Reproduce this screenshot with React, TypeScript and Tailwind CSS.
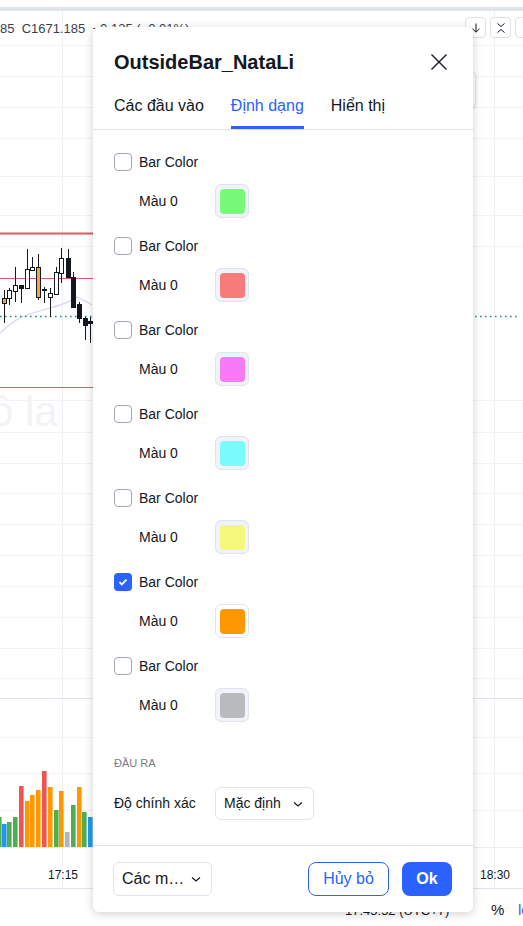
import React from "react"

const candles = [
  { x: 4, t: 298, b: 303, wt: 290, wb: 323, c: "o" },
  { x: 9, t: 290, b: 298, wt: 288, wb: 305, c: "w" },
  { x: 15, t: 285, b: 291, wt: 267, wb: 302, c: "w" },
  { x: 21, t: 285, b: 288, wt: 285, wb: 303, c: "b" },
  { x: 27, t: 269, b: 288, wt: 249, wb: 288, c: "w" },
  { x: 32, t: 267, b: 270, wt: 257, wb: 270, c: "w" },
  { x: 38, t: 267, b: 297, wt: 254, wb: 300, c: "o" },
  { x: 44, t: 289, b: 290, wt: 287, wb: 303, c: "b" },
  { x: 50, t: 293, b: 297, wt: 288, wb: 317, c: "w" },
  { x: 56, t: 272, b: 294, wt: 267, wb: 294, c: "w" },
  { x: 61, t: 258, b: 273, wt: 248, wb: 283, c: "w" },
  { x: 68, t: 258, b: 277, wt: 249, wb: 277, c: "b" },
  { x: 73, t: 277, b: 307, wt: 272, wb: 307, c: "b" },
  { x: 79, t: 304, b: 318, wt: 302, wb: 323, c: "b" },
  { x: 85, t: 318, b: 325, wt: 317, wb: 340, c: "b" },
  { x: 90, t: 321, b: 323, wt: 317, wb: 343, c: "b" },
]

const volume = [
  { x: -3, t: 817, c: "#4caf50" },
  { x: 2, t: 824, c: "#2196f3" },
  { x: 7, t: 822, c: "#4caf50" },
  { x: 13, t: 817, c: "#4caf50" },
  { x: 19, t: 786, c: "#f05350" },
  { x: 25, t: 801, c: "#ff9800" },
  { x: 30, t: 795, c: "#ff9800" },
  { x: 36, t: 790, c: "#ff9800" },
  { x: 42, t: 771, c: "#f05350" },
  { x: 48, t: 787, c: "#ff9800" },
  { x: 54, t: 810, c: "#4caf50" },
  { x: 59, t: 791, c: "#ff9800" },
  { x: 65, t: 832, c: "#b2b5be" },
  { x: 71, t: 805, c: "#4caf50" },
  { x: 77, t: 787, c: "#ff9800" },
  { x: 82, t: 812, c: "#4caf50" },
  { x: 88, t: 817, c: "#2196f3" },
]

const rows = [
  { checked: false, color: "#79f979" },
  { checked: false, color: "#f77b7b" },
  { checked: false, color: "#f77bf5" },
  { checked: false, color: "#79fbfb" },
  { checked: false, color: "#f5f77b" },
  { checked: true, color: "#ff9800" },
  { checked: false, color: "#b9babe" },
]

const gridY = [45, 76, 107, 138, 176, 215, 246, 400, 432, 463, 493, 524, 555, 586, 617, 648, 678, 737, 773, 810]

function Chart() {
  return (
    <svg className="absolute left-0 top-0" width="523" height="926">
      {gridY.map((y) => (
        <line key={y} x1="0" x2="523" y1={y + 0.5} y2={y + 0.5} stroke="#f2f3f6" />
      ))}
      <line x1="62.5" x2="62.5" y1="11" y2="888" stroke="#f0f1f4" />
      <line x1="494.5" x2="494.5" y1="11" y2="888" stroke="#f0f1f4" />
      <line x1="0" x2="523" y1="698.5" y2="698.5" stroke="#e0e3eb" />
      <line x1="0" x2="523" y1="847.5" y2="847.5" stroke="#eceef2" />
      <line x1="0" x2="523" y1="888.5" y2="888.5" stroke="#e0e3eb" />
      <line x1="0" x2="93" y1="233.5" y2="233.5" stroke="#dc5a60" strokeWidth="2" />
      <line x1="0" x2="93" y1="278.5" y2="278.5" stroke="#dd5c63" />
      <line x1="0" x2="93" y1="387.5" y2="387.5" stroke="#e0585f" />
      <path d="M0 333 Q12 322 20 318 T50 308 T73 298 T92 305" fill="none" stroke="#d7d3f5" strokeWidth="1.2" />
      <line x1="0" x2="520" y1="316.5" y2="316.5" stroke="#1f8e85" strokeWidth="1.6" strokeDasharray="1.6 3.4" />
      {candles.map((k, i) => (
        <g key={i}>
          <line x1={k.x + 0.5} x2={k.x + 0.5} y1={k.wt} y2={k.wb} stroke="#131722" />
          <rect
            x={k.x - 1.5}
            y={k.t + 0.5}
            width="4"
            height={Math.max(k.b - k.t, 1)}
            fill={k.c === "w" ? "#ffffff" : k.c === "o" ? "#f6a53d" : "#131722"}
            stroke="#131722"
            strokeWidth="1"
          />
        </g>
      ))}
      {volume.map((v, i) => (
        <rect key={i} x={v.x} y={v.t} width="4.6" height={847 - v.t} fill={v.c} />
      ))}
    </svg>
  )
}

function Chevron() {
  return (
    <svg width="18" height="18" viewBox="0 0 18 18" fill="none">
      <path d="M5 7.5l4 3.5 4-3.5" stroke="#131722" strokeWidth="1.2" />
    </svg>
  )
}

function Checkbox({ checked }: { checked: boolean }) {
  if (checked) {
    return (
      <div className="flex h-[18px] w-[18px] items-center justify-center rounded-[4px] bg-[#2962ff]">
        <svg width="12" height="12" viewBox="0 0 12 12" fill="none">
          <path d="M2.5 6.2l2.3 2.3 4.7-4.8" stroke="#ffffff" strokeWidth="1.8" />
        </svg>
      </div>
    )
  }
  return <div className="h-[18px] w-[18px] rounded-[4px] border border-[#a3a6af] bg-white" />
}

export default function App() {
  return (
    <div className="relative h-[926px] w-[523px] overflow-hidden bg-white font-['Liberation_Sans',Arial,sans-serif] text-[#131722]">
      <div className="absolute left-0 top-[7px] h-[4px] w-full bg-[#e0e3eb]" />
      <Chart />

      <div className="absolute left-0 top-[19px] whitespace-nowrap text-[13px] text-[#3b3f4a]">
        85&nbsp;&nbsp;C1671.185&nbsp;&nbsp;−0.135 (−0.01%)
      </div>

      <div className="absolute left-[465px] top-[17px] flex gap-[4px]">
        <div className="flex h-[21px] w-[21px] items-center justify-center rounded-[4px] border border-[#dfe1e6] bg-white">
          <svg width="12" height="12" viewBox="0 0 12 12" fill="none">
            <path d="M6 1.5v8.5M2.5 6.8L6 10.2l3.5-3.4" stroke="#131722" strokeWidth="1" />
          </svg>
        </div>
        <div className="flex h-[21px] w-[21px] items-center justify-center rounded-[4px] border border-[#dfe1e6] bg-white">
          <svg width="12" height="14" viewBox="0 0 12 14" fill="none">
            <path d="M2.5 2.5L6 5.5l3.5-3M2.5 11.5L6 8.5l3.5 3" stroke="#131722" strokeWidth="1" />
          </svg>
        </div>
        <div className="h-[21px] w-[21px] rounded-[4px] border border-[#dfe1e6] bg-white" />
      </div>

      <div className="absolute left-[300px] top-[71px] h-[37px] w-[176px] rounded-[5px] border border-[#e3e5ea] bg-white shadow-[0_1px_3px_rgba(0,0,0,0.12)]" />

      <div className="absolute left-[-10px] top-[391px] whitespace-nowrap text-[42px] leading-none text-[#f2f3f6]">
        ô la
      </div>

      <div className="absolute left-[48px] top-[866px] text-[12px] text-[#131722]">17:15</div>
      <div className="absolute left-[480px] top-[866px] text-[12px] text-[#131722]">18:30</div>
      <div className="absolute left-[345px] top-[901px] whitespace-nowrap text-[13px] text-[#131722]">
        17:45:52 (UTC+7)
      </div>
      <div className="absolute left-[491px] top-[899px] text-[15px] text-[#131722]">%</div>
      <div className="absolute left-[518px] top-[899px] text-[15px] text-[#2962ff]">log</div>

      {/* dialog */}
      <div className="absolute left-[93px] top-[27px] flex h-[885px] w-[380px] flex-col rounded-[6px] bg-white shadow-[0_2px_10px_rgba(0,0,0,0.18)]">
        <div className="mt-[21px] flex h-[28px] items-center justify-between pl-[21px] pr-[22px]">
          <div className="text-[20px] font-bold leading-[28px]">OutsideBar_NataLi</div>
          <svg width="24" height="24" viewBox="0 0 24 24" fill="none">
            <path d="M4.5 4.5l15 15M19.5 4.5l-15 15" stroke="#131722" strokeWidth="1.4" />
          </svg>
        </div>

        <div className="mt-[10px] flex h-[44px] gap-[27px] border-b border-[#e0e3eb] px-[21px] text-[16px]">
          <div className="relative flex h-[43px] items-center pb-[4px]">Các đầu vào</div>
          <div className="relative flex h-[43px] items-center pb-[4px] text-[#2962ff]">
            Định dạng
            <div className="absolute bottom-0 left-0 h-[3px] w-full bg-[#2962ff]" />
          </div>
          <div className="relative flex h-[43px] items-center pb-[4px]">Hiển thị</div>
        </div>

        <div className="flex flex-1 flex-col px-[21px] pt-[23px] text-[14px]">
          {rows.map((r, i) => (
            <div key={i} className="flex flex-col pb-[19px]">
              <div className="flex h-[18px] items-center gap-[7px]">
                <Checkbox checked={r.checked} />
                <span>Bar Color</span>
              </div>
              <div className="mt-[13px] flex items-center pl-[25px]">
                <span className="w-[76px]">Màu 0</span>
                <div
                  className={`flex h-[34px] w-[34px] items-center justify-center rounded-[6px] border border-[#e0e3eb] ${
                    r.checked ? "bg-white" : "bg-[#f0f3fa]"
                  }`}
                >
                  <div className="h-[25px] w-[25px] rounded-[4px]" style={{ backgroundColor: r.color }} />
                </div>
              </div>
            </div>
          ))}

          <div className="mt-[14px] text-[11px] leading-[16px] text-[#787b86]">ĐẦU RA</div>
          <div className="mt-[16px] flex items-center">
            <span className="w-[101px]">Độ chính xác</span>
            <div className="flex h-[33px] w-[99px] items-center justify-between rounded-[6px] border border-[#e0e3eb] pl-[8px] pr-[6px]">
              <span>Mặc định</span>
              <Chevron />
            </div>
          </div>
        </div>

        <div className="flex items-center justify-between border-t border-[#e0e3eb] px-[20px] pb-[16px] pt-[16px]">
          <div className="flex h-[34px] w-[99px] items-center justify-between rounded-[6px] border border-[#e0e3eb] pl-[8px] pr-[6px] text-[16px]">
            <span>Các m…</span>
            <Chevron />
          </div>
          <div className="flex gap-[13px] pr-[1px]">
            <div className="flex h-[34px] w-[81px] items-center justify-center rounded-[8px] border border-[#2962ff] text-[16px] text-[#2962ff]">
              Hủy bỏ
            </div>
            <div className="flex h-[34px] w-[50px] items-center justify-center rounded-[8px] bg-[#2962ff] text-[16px] font-bold text-white">
              Ok
            </div>
          </div>
        </div>
      </div>
    </div>
  )
}
